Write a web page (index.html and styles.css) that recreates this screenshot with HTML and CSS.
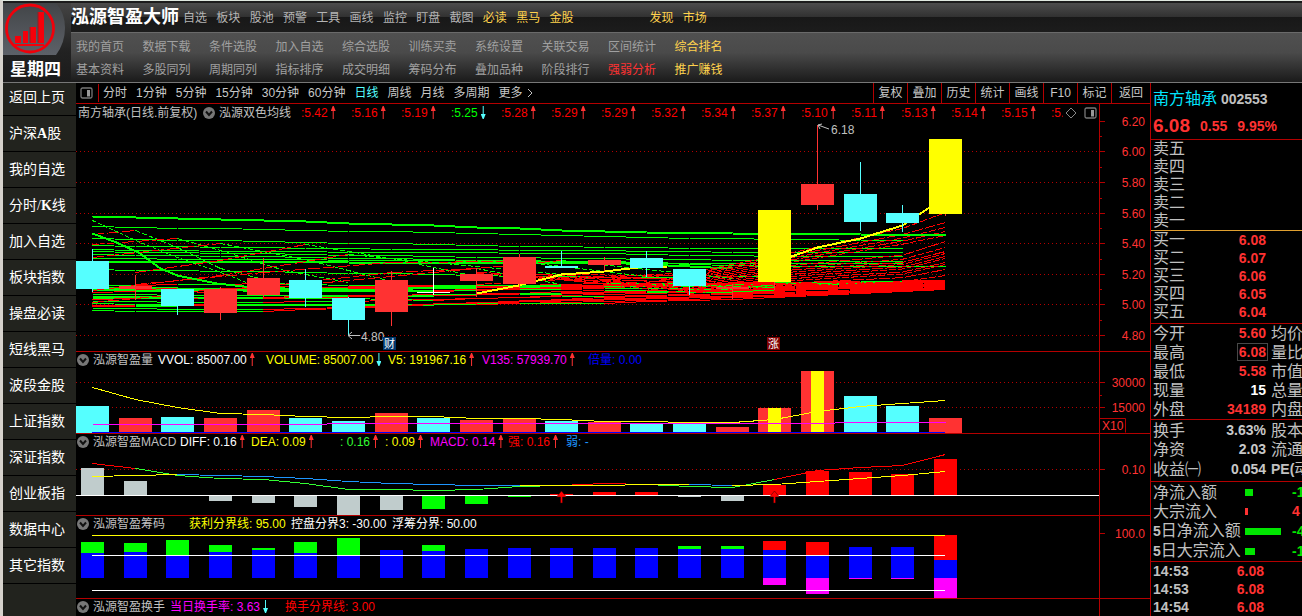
FILE: index.html
```html
<!DOCTYPE html>
<html lang="zh-CN">
<head>
<meta charset="utf-8">
<title>泓源智盈大师</title>
<link rel="stylesheet" href="styles.css">
</head>
<body>
<svg class="symbols" aria-hidden="true">
  <symbol id="fold" viewBox="0 0 12 12"><circle cx="6" cy="6" r="6" fill="#777"/><path d="M3 4.500l3 3.500 3-3.500" fill="none" stroke="#111" stroke-width="2"/></symbol>
  <symbol id="pane" viewBox="0 0 13 12"><rect x="1" y="1" width="11" height="10" rx="1.500" fill="none" stroke="#777" stroke-width="1.300"/><rect x="7" y="3" width="3" height="6.500" fill="#999"/></symbol>
</svg>
<header class="top">
  <div class="brand">
    <svg class="logo" viewBox="0 0 64 52" width="64" height="52" aria-label="logo">
      <defs><linearGradient id="slate" x2="0" y2="1"><stop offset="0" stop-color="#424548"/><stop offset="1" stop-color="#5d6168"/></linearGradient></defs>
      <path d="M0 0H53Q62 10 62 25T53 52H0Z" fill="url(#slate)"/>
      <circle cx="27" cy="25.500" r="23.500" fill="none" stroke="#f0000a" stroke-width="2.800"/>
      <path d="M12 33h6v7h-6zM20 28h5v12h-5zM27 24h6v16h-6zM35 9h6v31h-6zM11 41h30v2h-30z" fill="#f5000a"/>
      <path d="M35 9v31M27 24v16" stroke="#8a2228"/>
    </svg>
    <strong class="weekday">星期四</strong>
  </div>
  <div class="menus">
    <div class="menu-main">
      <h1 class="title">泓源智盈大师</h1>
      <nav class="menu-row primary">
        <a href="#">自选</a><a href="#">板块</a><a href="#">股池</a><a href="#">预警</a><a href="#">工具</a><a href="#">画线</a><a href="#">监控</a><a href="#">盯盘</a><a href="#">截图</a><a href="#" class="gold">必读</a><a href="#" class="gold">黑马</a><a href="#" class="gold">金股</a><a href="#" class="gold market">发现</a><a href="#" class="gold">市场</a>
      </nav>
    </div>
    <nav class="secondary-bar">
      <div class="menu-row secondary">
        <a href="#">我的首页</a><a href="#">数据下载</a><a href="#">条件选股</a><a href="#">加入自选</a><a href="#">综合选股</a><a href="#">训练买卖</a><a href="#">系统设置</a><a href="#">关联交易</a><a href="#">区间统计</a><a href="#" class="gold">综合排名</a>
        <a href="#">基本资料</a><a href="#">多股同列</a><a href="#">周期同列</a><a href="#">指标排序</a><a href="#">成交明细</a><a href="#">筹码分布</a><a href="#">叠加品种</a><a href="#">阶段排行</a><a href="#" class="alert">强弱分析</a><a href="#" class="gold">推广赚钱</a>
      </div>
    </nav>
  </div>
</header>
<main class="work">
  <nav class="side">
    <a href="#">返回上页</a><a href="#">沪深<b>A</b>股</a><a href="#">我的自选</a><a href="#">分时/<b>K</b>线</a><a href="#">加入自选</a><a href="#">板块指数</a><a href="#">操盘必读</a><a href="#">短线黑马</a><a href="#">波段金股</a><a href="#">上证指数</a><a href="#">深证指数</a><a href="#">创业板指</a><a href="#">数据中心</a><a href="#">其它指数</a>
  </nav>
  <div class="center">
    <div class="toolbar">
      <button class="pane-button" aria-label="面板"><svg width="13" height="12"><use href="#pane"/></svg></button>
      <div class="periods">
        <button>分时</button><button>1分钟</button><button>5分钟</button><button>15分钟</button><button>30分钟</button><button>60分钟</button><button class="active">日线</button><button>周线</button><button>月线</button><button>多周期</button><button class="more">更多<svg width="6" height="10" viewBox="0 0 6 10"><path d="M1 1l4 4-4 4" fill="none" stroke="#c0c0c0"/></svg></button>
      </div>
      <div class="tools">
        <button>复权</button><button>叠加</button><button>历史</button><button>统计</button><button>画线</button><button>F10</button><button>标记</button><button>返回</button>
      </div>
    </div>

    <section class="panel price">
      <div class="plot">
        <div class="readout averages">
          <span class="stock">南方轴承(日线.前复权)</span>
          <svg class="fold" width="12" height="12"><use href="#fold"/></svg>
          <span class="name">泓源双色均线</span>
          <div class="values red"><span class="up">:5.42</span><span class="up">:5.16</span><span class="up">:5.19</span><span class="down lime">:5.25</span><span class="up">:5.28</span><span class="up">:5.29</span><span class="up">:5.29</span><span class="up">:5.32</span><span class="up">:5.34</span><span class="up">:5.37</span><span class="up">:5.10</span><span class="up">:5.11</span><span class="up">:5.13</span><span class="up">:5.14</span><span class="up">:5.15</span><span>:5.</span></div>
          <div class="corner"><svg width="12" height="12" viewBox="0 0 12 12"><path d="M6 1l5 5-5 5-5-5z" fill="none" stroke="#888"/></svg><svg width="13" height="12"><use href="#pane"/></svg></div>
        </div>
        <svg class="chart" id="price"></svg>
      </div>
      <svg class="axis" id="price-axis"></svg>
    </section>

    <section class="panel volume">
      <div class="plot">
        <div class="readout">
          <svg class="fold" width="12" height="12"><use href="#fold"/></svg>
          <span class="name">泓源智盈量</span><span class="white up">VVOL: 85007.00</span><span class="yellow down">VOLUME: 85007.00</span><span class="yellow up">V5: 191967.16</span><span class="magenta up">V135: 57939.70</span><span class="blue">倍量: 0.00</span>
        </div>
        <svg class="chart" id="volume"></svg>
      </div>
      <svg class="axis" id="volume-axis"></svg>
    </section>

    <section class="panel macd">
      <div class="plot">
        <div class="readout">
          <svg class="fold" width="12" height="12"><use href="#fold"/></svg>
          <span class="name">泓源智盈MACD</span><span class="white up">DIFF: 0.16</span><span class="yellow up">DEA: 0.09</span><span class="green up">: 0.16</span><span class="yellow up">: 0.09</span><span class="magenta up">MACD: 0.14</span><span class="red up">强: 0.16</span><span class="sky">弱: -</span>
        </div>
        <svg class="chart" id="macd"></svg>
      </div>
      <svg class="axis" id="macd-axis"></svg>
    </section>

    <section class="panel chips">
      <div class="plot">
        <div class="readout">
          <svg class="fold" width="12" height="12"><use href="#fold"/></svg>
          <span class="name">泓源智盈筹码</span><span class="yellow">获利分界线: 95.00</span><span class="white">控盘分界3: -30.00</span><span class="white">浮筹分界: 50.00</span>
        </div>
        <svg class="chart" id="chips"></svg>
      </div>
      <svg class="axis" id="chips-axis"></svg>
    </section>

    <section class="panel turnover">
      <div class="plot">
        <div class="readout">
          <svg class="fold" width="12" height="12"><use href="#fold"/></svg>
          <span class="name">泓源智盈换手</span><span class="magenta down">当日换手率: 3.63</span><span class="red">换手分界线: 3.00</span>
        </div>
      </div>
      <div class="axis"></div>
    </section>
  </div>

  <aside class="quote">
    <div class="quote-head">
      <p class="who"><span class="stock-name">南方轴承</span> <b>002553</b></p>
      <p class="last"><b class="big">6.08</b><b>0.55</b><b>9.95%</b></p>
    </div>
    <table class="book asks">
      <tr><th>卖五</th></tr><tr><th>卖四</th></tr><tr><th>卖三</th></tr><tr><th>卖二</th></tr><tr><th>卖一</th></tr>
    </table>
    <table class="book bids">
      <tr><th>买一</th><td>6.08</td></tr><tr><th>买二</th><td>6.07</td></tr><tr><th>买三</th><td>6.06</td></tr><tr><th>买四</th><td>6.05</td></tr><tr><th>买五</th><td>6.04</td></tr>
    </table>
    <table class="stats">
      <tr><th>今开</th><td>5.60</td><th>均价</th></tr>
      <tr><th>最高</th><td><span class="boxed">6.08</span></td><th>量比</th></tr>
      <tr><th>最低</th><td>5.58</td><th>市值</th></tr>
      <tr><th>现量</th><td class="white">15</td><th>总量</th></tr>
      <tr><th>外盘</th><td>34189</td><th>内盘</th></tr>
    </table>
    <table class="stats neutral">
      <tr><th>换手</th><td>3.63%</td><th>股本</th></tr>
      <tr><th>净资</th><td>2.03</td><th>流通</th></tr>
      <tr><th>收益㈠</th><td>0.054</td><th><b>PE(</b>动</th></tr>
    </table>
    <table class="flow">
      <tr><th>净流入额</th><td><i class="bar" style="width:8px"></i></td><td class="amount">-1</td></tr>
      <tr class="in"><th>大宗流入</th><td><i class="bar" style="width:3px"></i></td><td class="amount">4</td></tr>
      <tr><th><b>5</b>日净流入额</th><td><i class="bar" style="width:36px"></i></td><td class="amount">-4</td></tr>
      <tr><th><b>5</b>日大宗流入</th><td><i class="bar" style="width:10px"></i></td><td class="amount">-1</td></tr>
    </table>
    <table class="ticks">
      <tr><th>14:53</th><td>6.08</td></tr><tr><th>14:53</th><td>6.08</td></tr><tr><th>14:54</th><td>6.08</td></tr>
    </table>
  </aside>
</main>
<script src="charts.js"></script>
</body>
</html>
```

FILE: styles.css
```css
* { box-sizing: border-box; }

body {
  margin: 0;
  height: 100vh;
  overflow: hidden;
  display: flex;
  flex-direction: column;
  background: #000;
  color: #c0c0c0;
  border-left: 3px solid #d6d2cc;
  border-top: 1px solid #dfe8df;
  font: 12px/16px "Liberation Sans", "Noto Sans CJK SC", sans-serif;
}

a { color: inherit; text-decoration: none; }
button { font: inherit; color: inherit; background: none; border: 0; padding: 0; white-space: nowrap; }
p, h1 { margin: 0; }
.symbols { position: absolute; width: 0; height: 0; }

.white { color: #fff; }
.yellow { color: #ff0; }
.magenta { color: #f0f; }
.blue { color: #00f; }
.green { color: #32ff32; }
.red { color: #f00; }
.sky { color: #1e96ff; }
.gold { color: #ffd24d; }
.alert { color: #ff3232; }
.lime { color: #0f0; }

/* header */
.top {
  display: flex;
  height: 82px;
  flex: none;
  padding-top: 2px;
  border-bottom: 1px solid #777;
  background: #1c1c1c;
}
.brand { width: 68px; flex: none; background: linear-gradient(#444 0, #222 48px, #1b1b1b); }
.logo { display: block; }
.weekday { display: block; padding-left: 7px; color: #fff; font-size: 17px; line-height: 30px; }
.menus { flex: 1; min-width: 0; }
.menu-main {
  display: flex;
  height: 30px;
  border-bottom: 1px solid #6a6a6a;
  background: linear-gradient(#4c4c4c, #303030 50%, #181818 50%, #1c1c1c);
}
.title { width: 112px; color: #fff; font-size: 18px; line-height: 29px; font-weight: bold; white-space: nowrap; }
.menu-row { display: grid; white-space: nowrap; color: #b4b4b4; }
.primary { width: 533px; grid-template-columns: repeat(16, 1fr); line-height: 31px; }
.market { grid-column: 15; }
.menu-row .gold { color: #ffd24d; }
.menu-row .alert { color: #ff3232; }
.secondary-bar {
  height: 49px;
  padding: 3px 0 3px 5px;
  background: linear-gradient(#505050, #4a4a4a 40%, #1a1a1a);
}
.secondary {
  width: 665px;
  grid-template-columns: repeat(10, 1fr);
  line-height: 23px;
  color: #a0a0a0;
}

/* body columns */
.work { flex: 1; min-height: 0; display: flex; }
.side { width: 73px; flex: none; background: #22231e; overflow: hidden; }
.side a {
  display: block;
  height: 36px;
  padding-left: 6px;
  border-bottom: 1px solid #000;
  color: #fff;
  font: 14px/35px "Liberation Serif", "Noto Sans CJK SC", serif;
  white-space: nowrap;
}
.side a:first-child { height: 33px; line-height: 30px; }
.center { flex: 1; min-width: 0; display: flex; flex-direction: column; }

.toolbar { display: flex; flex: none; height: 21px; border-bottom: 1px solid #b40000; line-height: 20px; color: #c8c8c8; }
.pane-button { width: 23px; margin: 1px 0; border-right: 1px solid #b40000; }
.pane-button svg { display: block; margin-left: 4px; }
.periods { display: flex; gap: 9px; padding-left: 4px; }
.periods .active { color: #5ff; }
.more { display: flex; gap: 4px; align-items: center; }
.tools { display: flex; margin-left: auto; }
.tools button { width: 34px; border-left: 1px solid #b40000; }
.tools button:last-child { width: 39px; }

/* chart panels */
.panel { display: flex; flex: none; border-bottom: 1px solid #b40000; }
.turnover { flex: 1; border-bottom: 0; }
.plot { flex: 1; min-width: 0; }
.axis { width: 51px; flex: none; border-left: 1px solid #b40000; }
.price .axis { height: 247px; }
.volume .axis, .macd .axis { height: 81px; }
.chips .axis { height: 82px; }
.turnover .axis { height: auto; }
.chart { display: block; width: 100%; height: 65px; overflow: hidden; }
.price .chart { height: 229px; }
.chips .chart { height: 66px; }
.chart text, .axis text { font-size: 12px; fill: #ff3232; }
.chart .note { fill: #c0c0c0; }
.chart .mark { fill: #fff; font-size: 11px; }

.readout { display: grid; align-items: center; height: 16px; padding-left: 1px; white-space: nowrap; }
.volume .readout { grid-template-columns: 16px 65px 108px 122px 94px 106px 1fr; }
.macd .readout { grid-template-columns: 16px 87px 71px 89px 45px 45px 78px 58px 1fr; }
.chips .readout { grid-template-columns: 16px 96px 102px 101px 1fr; }
.turnover .readout { grid-template-columns: 16px 77px 115px 1fr; }
.averages { display: flex; height: 18px; padding: 0 2px 0 2px; }
.stock { width: 125px; flex: none; }
.averages .name { width: 82px; flex: none; padding-left: 4px; }
.averages .fold { flex: none; }
.values { display: flex; flex: 1; min-width: 0; overflow: hidden; }
.values span { width: 50px; flex: none; padding-left: 4px; }
.values span:last-child { width: auto; }
.values .lime { color: #0f0; }
.corner { display: flex; gap: 7px; flex: none; padding-left: 2px; }

.up::after, .down::after {
  content: "";
  display: inline-block;
  width: 5px;
  height: 13px;
  margin-left: 3px;
  vertical-align: -2px;
  background: #ff3232;
  clip-path: polygon(2px 0, 3px 0, 5px 5px, 3px 5px, 3px 13px, 2px 13px, 2px 5px, 0 5px);
}
.down::after {
  background: #5ff;
  clip-path: polygon(2px 0, 3px 0, 3px 8px, 5px 8px, 3px 13px, 2px 13px, 0 8px, 2px 8px);
}

/* quote column */
.quote { width: 152px; flex: none; overflow: hidden; border-left: 1px solid #b40000; font-size: 14px; }
.quote table { border-collapse: collapse; width: 190px; table-layout: fixed; display: block; border-bottom: 1px solid #b40000; }
.quote th { padding: 0 0 0 2px; text-align: left; font-size: 16px; font-weight: normal; white-space: nowrap; }
.quote th b { font-size: 14px; }
.quote td { padding: 0; color: #ff3232; font-weight: bold; text-align: right; white-space: nowrap; }
.quote tr { height: 18px; }
.quote th, .quote td { line-height: 18px; }
.quote-head { height: 57px; padding: 1px 0 0 2px; border-bottom: 1px solid #b40000; white-space: nowrap; }
.who { line-height: 30px; }
.stock-name { color: #00e5ff; font-size: 16px; }
.last { display: flex; gap: 10px; line-height: 24px; color: #ff3232; }
.big { font-size: 19px; }
.book th, .stats th:first-child { width: 60px; }
.book td, .stats td { width: 55px; }
.quote .asks { border-color: #e0a030; }
.stats th:last-child { padding-left: 5px; }
.quote .stats tr, .quote .flow tr { height: 19px; }
.quote .stats th, .quote .stats td, .quote .flow th, .quote .flow td { line-height: 19px; }
.quote .bids { padding-bottom: 2px; }
.quote .neutral { padding: 1px 0 2px; }
.quote .neutral td { color: #c8c8c8; }
.quote .stats .white { color: #fff; }
.boxed { display: inline-block; height: 18px; line-height: 16px; padding: 0 1px; margin-right: -2px; border: 1px solid #484848; vertical-align: top; }
.flow th { width: 94px; }
.flow td { width: 47px; }
.quote .flow td { text-align: left; color: #00e600; }
.quote .flow .in td { color: #ff3232; }
.flow .bar { display: block; height: 7px; background: currentColor; }
.quote .flow { padding: 1px 0 0; }
.ticks th { width: 60px; }
.ticks td { width: 53px; }
.quote .ticks th { font-size: 14px; font-weight: bold; }
.quote .ticks { border-bottom: 0; }
```

FILE: charts.js
```js
const NS = 'http://www.w3.org/2000/svg';
const RED = '#ff3232', CYAN = '#5ff', YELLOW = '#ff0', PURE = '#f00', LIME = '#0f0', RULE = '#b40000';
const cx = i => Math.round(16 + i * 42.65);

function layer(id, top) {
  const root = document.getElementById(id);
  const add = (tag, attrs, text) => {
    const node = document.createElementNS(NS, tag);
    for (const key in attrs) node.setAttribute(key, attrs[key]);
    if (text) node.textContent = text;
    root.appendChild(node);
    return node;
  };
  return {
    rect: (x, y1, y2, w, fill) => add('rect', { x, y: y1 - top, width: w, height: y2 - y1, fill }),
    dots: y => add('line', { x1: 0, x2: '100%', y1: y - top + 0.5, y2: y - top + 0.5, stroke: RULE, 'stroke-dasharray': '1 3' }),
    line: (pts, stroke, w = 1, dash = 'none') => add('polyline', {
      points: pts.map(p => [p[0] + 0.5, p[1] - top + 0.5].join()).join(' '),
      fill: 'none', stroke, 'stroke-width': w, 'stroke-dasharray': dash, 'shape-rendering': 'crispEdges'
    }),
    full: (y, fill) => add('rect', { x: 0, y: y - top, width: '100%', height: 1, fill }),
    path: (d, attrs) => add('path', { d, transform: `translate(0 ${-top})`, ...attrs }),
    text: (x, y, s, cls, anchor = 'start') => add('text', { x, y: y - top, class: cls, 'text-anchor': anchor }, s)
  };
}

function axis(id, top, labels, minor) {
  const a = layer(id, top);
  labels.forEach(([y, s]) => { a.rect(0, y, y + 1, 5, RULE); a.text(45, y + 5, s, '', 'end'); });
  minor.forEach(y => a.rect(0, y, y + 1, 2, RULE));
  return a;
}

/* price */
const p = layer('price', 122);
[151, 182, 213, 243, 274, 304, 335].forEach(p.dots);

const anchorsX = [0, 4, 8, 12, 16, 20];
function valueAt(ys, i) {
  const k = Math.min(4, Math.floor(i / 4));
  return Math.round(ys[k] + (ys[k + 1] - ys[k]) * (i - anchorsX[k]) / 4);
}
function average(ys, last = 20, w = 1) {
  for (let i = 0; i < last; i++) {
    const a = valueAt(ys, i), b = valueAt(ys, i + 1);
    p.line([[cx(i), a], [cx(i + 1), b]], b < a ? PURE : LIME, w);
  }
}
[[226, 229, 232, 236, 239, 240], [238, 241, 244, 247, 248, 248], [245, 247, 249, 250, 252, 252],
 [249, 251, 252, 253, 256, 256], [251, 253, 256, 258, 260, 261], [254, 256, 259, 261, 266, 266],
 [258, 259, 260, 262, 263, 263]].forEach((ys, k) => average(ys, k === 5 ? 20 : 19));
average([261, 261, 262, 262, 270, 255], 15, 2);
average([269, 271, 274, 277, 276, 276], 16);

/* long averages: level on the left, gathering into a rising band on the right */
for (let k = 0; k < 12; k++) {
  const y = 285 + k * 2.3;
  average([y, y + (k % 3 === 0 ? -2 : 1), Math.min(304, y - (k % 2 ? 2 : -1)), 283 + k * 1.8, 283 + k * 1.3, 280 + k * 0.85], 20, k % 4 === 1 ? 2 : 1);
}
average([287, 288, 287, 285, 282, 280], 20, 2);
average([289, 287, 290, 286, 284, 281], 20);
average([296, 297, 294, 292, 289, 284], 20);

const ends = [212, 222, 227, 231, 235, 241, 247, 251, 253, 256, 258, 262, 264, 269, 275];
ends.forEach((y, k) => {
  const mid = 256 + k * 2.1;
  const start = 9 + (k * 3) % 5;
  p.line([[cx(start), 284 - (k * 5) % 13], [cx(14), 272 + k * 1.5], [cx(16), mid], [cx(19), (mid + y) / 2 + (k < 5 ? -6 : 1)], [cx(20), y]], PURE, 1, k % 2 ? '11 2' : '7 2');
});

/* short averages that turn over within the first half */
[[[0, 234], [1, 230], [2, 247], [3, 268], [4, 279]], [[0, 244], [2, 238], [3, 250], [4.5, 270], [6, 282]],
 [[0, 257], [3, 243], [5, 259], [7, 281]], [[1, 272], [3, 260], [5, 244], [7, 258], [9, 276]],
 [[1, 284], [4, 272], [7, 262], [10, 261], [13, 276]], [[0, 302], [4, 286], [7, 272], [9, 268], [11, 284]],
 [[0, 290], [3, 275], [6, 254], [8, 262], [11, 274]], [[4, 288], [8, 272], [11, 260], [15, 278]]].forEach(pts => {
  for (let i = 1; i < pts.length; i++) {
    const up = pts[i][1] < pts[i - 1][1];
    p.line([[cx(pts[i - 1][0]), pts[i - 1][1]], [cx(pts[i][0]), pts[i][1]]], up ? PURE : LIME, 1, up ? '12 3' : '5 2');
  }
});
p.line([[16, 220], [66, 243], [101, 257], [150, 274], [175, 284]], LIME, 1, '4 2');
p.line([[16, 233], [40, 242], [62, 252], [84, 268], [101, 275], [140, 283], [186, 288]], LIME, 2);
average([216, 220, 225, 231, 233, 234], 20, 2);
p.line([[400, 293], [442, 285], [485, 274], [528, 271], [570, 266], [590, 266]], YELLOW, 2);
p.line([[698, 266], [715, 256], [741, 247], [784, 238], [826, 225], [853, 207]], YELLOW, 2);

[[261, 289, 249, 292, CYAN], [286, 289, 275, 300, RED], [289, 306, 289, 315, CYAN], [289, 313, 287, 320, RED],
 [278, 295, 258, 297, RED], [280, 298, 269, 307, CYAN], [298, 320, 297, 335, CYAN], [280, 312, 271, 326, RED],
 [292, 293, 268, 295, '#fff'], [274, 281, 268, 297, RED], [257, 284, 254, 288, RED], [266, 268, 251, 268, CYAN],
 [260, 265, 257, 271, RED], [258, 268, 251, 277, CYAN], [269, 286, 269, 295, CYAN], [287, 289, 284, 299, RED],
 [210, 282, 282, 290, YELLOW], [184, 205, 125, 210, RED], [194, 222, 162, 231, CYAN], [213, 223, 205, 232, CYAN],
 [139, 214, 214, 216, YELLOW]].forEach(([top, bottom, high, lowest, fill], i) => {
  p.rect(cx(i) - 16, top, bottom, 33, fill);
  p.rect(cx(i), high, lowest, 1, fill === YELLOW ? RED : fill);
});
p.path('M742 125l11 4M742 125l4 -1M742 125l2 4', { stroke: '#c0c0c0', fill: 'none' });
p.text(755, 134, '6.18', 'note');
p.path('M272 335.500h12M276 332l-4 3.500 4 3.500', { stroke: '#c0c0c0', fill: 'none' });
p.text(285, 341, '4.80', 'note');
p.rect(307, 337, 350, 13, '#00366c');
p.text(308, 348, '财', 'mark');
p.rect(691, 337, 350, 13, '#800000');
p.text(692, 348, '涨', 'mark');
axis('price-axis', 104, [[121, '6.20'], [151, '6.00'], [182, '5.80'], [213, '5.60'], [243, '5.40'], [274, '5.20'], [304, '5.00'], [335, '4.80']],
  [136, 167, 198, 228, 259, 289, 320]);

/* volume */
const v = layer('volume', 368);
[382, 407].forEach(v.dots);
const c = CYAN, r = RED;
[[406, c], [418, r], [417, c], [418, r], [410, r], [418, c], [421, c], [413, r], [418, c], [420, r], [419, r], [421, c],
 [422, r], [424, c], [424, c], [427, r], [408, r], [371, r], [396, c], [406, c], [418, r]].forEach(([y, fill], i) => {
  v.rect(cx(i) - 16, y, 433, 33, fill);
  if (i === 16 || i === 17) v.rect(cx(i) - 6, y, 433, 13, YELLOW);
});
v.line([387, 399, 407, 413, 414, 416, 417, 416, 416, 418, 418, 419, 421, 421, 422, 422, 419, 411, 406, 403, 400].map((y, i) => [cx(i), y]), YELLOW);
v.line([[16, 424], [250, 424], [251, 423], [758, 423], [759, 422], [869, 422]], '#f0f');
v.rect(16, 432, 433, 853, '#00f');
const va = axis('volume-axis', 352, [[382, '30000'], [407, '15000']], [395]);
va.path('M0 418.500h25.500v14', { stroke: RULE, fill: 'none' });
va.text(2, 430, 'X10', '');

/* macd */
const m = layer('macd', 450);
m.dots(469);
[[468, 0], [481, 0], null, [501, 0], [503, 0], [507, 0], [515, 0], [510, 0], [509, 1], [504, 1], [497, 1],
 [494, 2], [492, 2], [492, 2], [497, 0], [501, 0], [485, 2], [471, 2], [472, 2], [474, 2], [459, 2]].forEach((bar, i) => {
  if (bar) m.rect(cx(i) - 11, Math.min(bar[0], 495), Math.max(bar[0], 495), 23, ['#c0cccc', LIME, PURE][bar[1]]);
});
const trace = (ys, from, to, color) => m.line(ys.slice(from, to + 1).map((y, k) => [cx(from + k), y]), color);
const diff = [463, 468, 475, 478, 479, 483, 489, 489, 490, 489, 486, 485, 483, 484, 486, 487, 479, 470, 467, 465, 454];
const dea = [476, 475, 474, 475, 476, 478, 481, 483, 484, 485, 485, 485, 485, 484, 484, 485, 484, 481, 478, 475, 471];
trace(diff, 0, 1, PURE); trace(diff, 1, 11, '#32ff32'); trace(diff, 11, 13, PURE); trace(diff, 13, 16, '#32ff32'); trace(diff, 16, 20, PURE);
trace(dea, 0, 2, YELLOW); trace(dea, 2, 10, '#1e96ff'); trace(dea, 10, 14, YELLOW); trace(dea, 14, 15, '#1e96ff'); trace(dea, 15, 20, YELLOW);
m.full(495, '#fff');
[11, 16].forEach(i => m.path(`M${cx(i) + .5} 491l5 6h-4v6h-2v-6h-4z`, { fill: PURE, stroke: '#300', 'stroke-width': 0.5 }));
axis('macd-axis', 434, [[469, '0.10']], []);

/* chips */
const h = layer('chips', 532);
[[542, 553], [543, 552], [540, 555], [545, 552], [548, 550], [542, 553], [538, 555], [550, 550], [545, 551], [549, 549],
 [548, 548], [548, 548], [548, 548], [548, 548], [546, 549], [546, 549], [541, 550, 585], [542, 555, 594],
 [547, 547, 579], [547, 547, 579], [535, 560, 598]].forEach(([top, blue, below], i) => {
  const x = cx(i) - 11;
  h.rect(x, top, blue, 23, i > 15 ? PURE : LIME);
  h.rect(x, blue, 578, 23, '#00f');
  if (below) h.rect(x, 578, below, 23, '#f0f');
});
h.rect(16, 535, 536, 853, YELLOW);
h.rect(16, 555, 556, 853, '#fff');
h.rect(16, 590, 591, 853, '#fff');
axis('chips-axis', 516, [[533, '100.0']], []);
```
